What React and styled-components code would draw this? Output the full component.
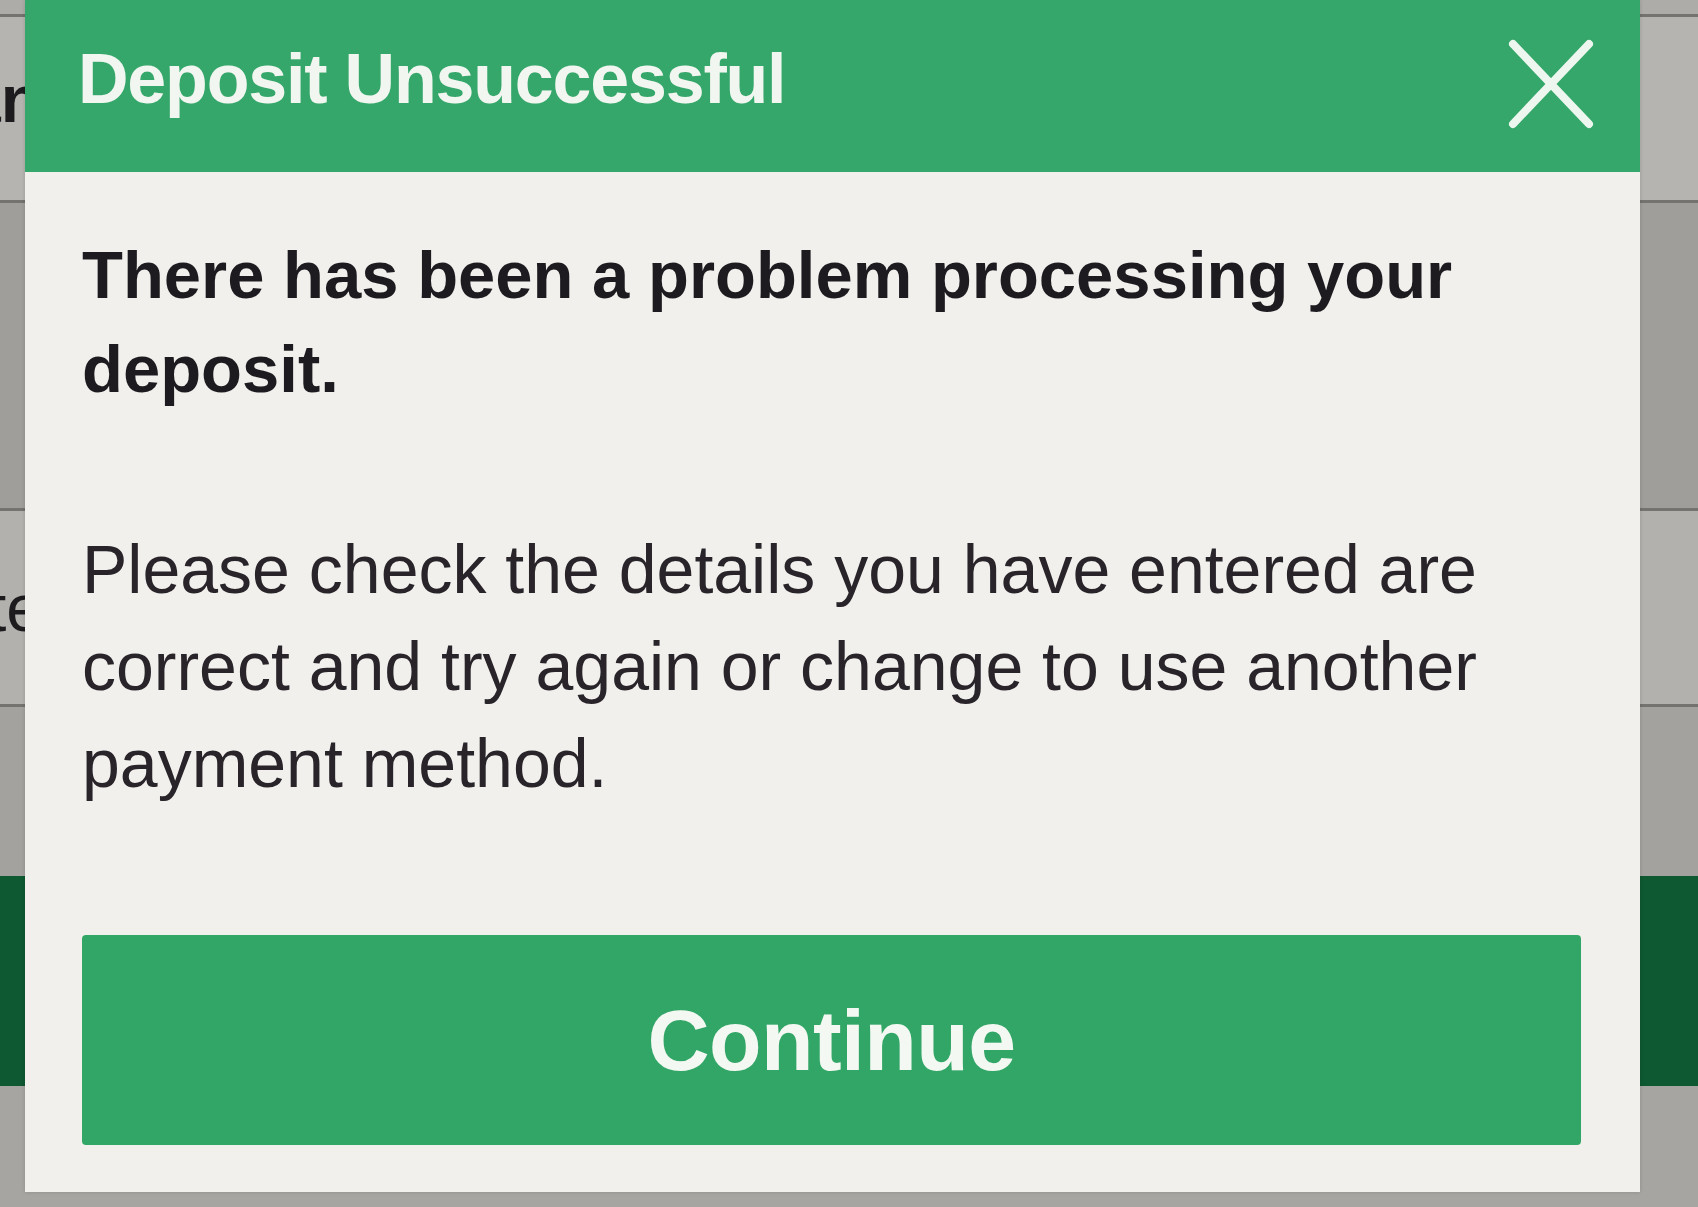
import React from "react"
import styled, { createGlobalStyle } from "styled-components"

const GlobalStyle = createGlobalStyle`
  html, body {
    margin: 0;
    padding: 0;
    background: #a9a7a4;
    overflow: hidden;
  }
  body {
    font-family: "Liberation Sans", Arial, Helvetica, sans-serif;
  }
`

const bands = [
  { height: 14, color: "#aeaca9" },
  { height: 186, color: "#b6b4b1", peek: "an", peekBold: true },
  { height: 308, color: "#a09e9b" },
  { height: 196, color: "#b3b1ae", peek: "te" },
  { height: 172, color: "#a4a29f" },
  { height: 210, color: "#0e5931", noLine: true },
  { height: 121, color: "#a7a5a2", noLine: true },
]

function CloseIcon() {
  return (
    <svg width="86" height="90" viewBox="0 0 86 90" fill="none">
      <path
        d="M5 5 L81 85 M81 5 L5 85"
        stroke="#eef7ef"
        strokeWidth="8"
        strokeLinecap="round"
      />
    </svg>
  )
}

function App() {
  return (
    <Screen>
      <GlobalStyle />
      <Backdrop>
        {bands.map((b, i) => (
          <Band key={i} $h={b.height} $color={b.color} $line={!b.noLine && i > 0}>
            {b.peek && <Peek $bold={b.peekBold}>{b.peek}</Peek>}
          </Band>
        ))}
      </Backdrop>

      <Modal>
        <Header>
          <Title>Deposit Unsuccessful</Title>
          <CloseButton aria-label="Close">
            <CloseIcon />
          </CloseButton>
        </Header>
        <Body>
          <Lead>There has been a problem processing your deposit.</Lead>
          <Message>
            Please check the details you have entered are correct and try again or
            change to use another payment method.
          </Message>
          <ContinueButton>Continue</ContinueButton>
        </Body>
      </Modal>
    </Screen>
  )
}

const Screen = styled.div`
  position: relative;
  width: 1698px;
  height: 1207px;
  overflow: hidden;
`

const Backdrop = styled.div`
  display: flex;
  flex-direction: column;
  height: 100%;
`

const Band = styled.div`
  display: flex;
  align-items: center;
  flex: none;
  height: ${(p) => p.$h}px;
  background: ${(p) => p.$color};
  border-top: ${(p) => (p.$line ? "3px solid #75736f" : "none")};
  box-sizing: border-box;
  overflow: hidden;
`

const Peek = styled.span`
  margin-left: ${(p) => (p.$bold ? "-36px" : "-12px")};
  margin-top: ${(p) => (p.$bold ? "-20px" : "0")};
  font-size: 66px;
  font-weight: ${(p) => (p.$bold ? 700 : 400)};
  color: #1e1b1f;
`

const Modal = styled.div`
  position: absolute;
  top: 0;
  left: 25px;
  width: 1615px;
  display: flex;
  flex-direction: column;
  background: #f1f0ec;
  box-shadow: 0 0 4px rgba(0, 0, 0, 0.15);
`

const Header = styled.div`
  display: flex;
  justify-content: space-between;
  align-items: flex-start;
  height: 172px;
  box-sizing: border-box;
  padding: 44px 46px 0 53px;
  background: #35a76a;
`

const Title = styled.h1`
  margin: 0;
  font-size: 70px;
  line-height: 1;
  font-weight: 700;
  letter-spacing: -1.2px;
  color: #f1f6f0;
`

const CloseButton = styled.button`
  display: flex;
  padding: 0;
  margin-top: -5px;
  border: none;
  background: none;
  cursor: pointer;
`

const Body = styled.div`
  display: flex;
  flex-direction: column;
  padding: 56px 59px 47px 57px;
`

const Lead = styled.p`
  margin: 0 0 105px;
  font-size: 67px;
  line-height: 94px;
  font-weight: 700;
  color: #1e1b20;
`

const Message = styled.p`
  margin: 0 0 123px;
  font-size: 68px;
  line-height: 97px;
  font-weight: 400;
  color: #28242a;
`

const ContinueButton = styled.button`
  height: 210px;
  border: none;
  border-radius: 4px;
  background: #32a666;
  color: #f4f8f3;
  font-family: "Liberation Sans", Arial, Helvetica, sans-serif;
  font-size: 86px;
  font-weight: 700;
  letter-spacing: -0.6px;
  cursor: pointer;
`

export default App
